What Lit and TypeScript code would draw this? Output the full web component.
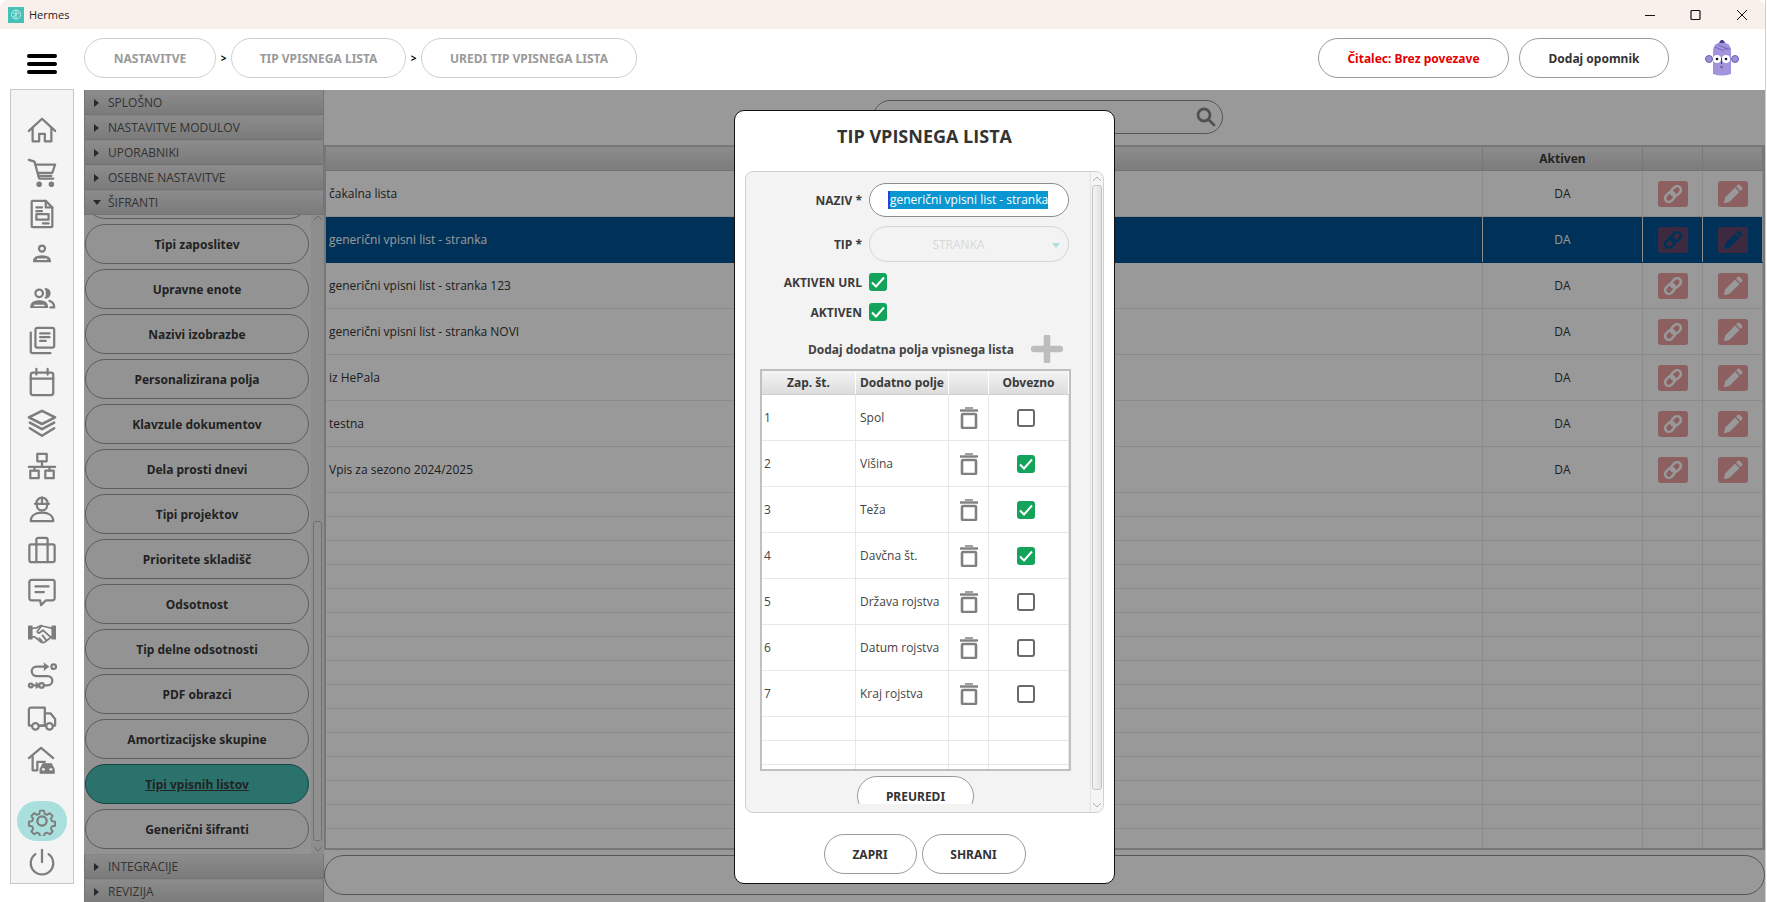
import { LitElement, html, css, svg } from "lit";
import { customElement } from "lit/decorators.js";

const FS = (inner: unknown, vb = "0 0 32 32") => html`<svg class="ic" viewBox=${vb} fill="none" stroke="currentColor" stroke-width="2.400" stroke-linecap="round" stroke-linejoin="round">${inner}</svg>`;

const NAV = [
  svg`<path d="M2 17 16 4l14 13"/><path d="M6 14v14h7v-8h6v8h7V14"/>`,
  svg`<path d="M2 3l6 2 5 18h15"/><path d="M9 8h21l-3 9H11.500"/><path d="M12 20h14"/><circle cx="13" cy="29" r="1.800" fill="currentColor"/><circle cx="26" cy="29" r="1.800" fill="currentColor"/>`,
  svg`<path d="M6 2h14l7 7v20a1 1 0 0 1-1 1H6a1 1 0 0 1-1-1V3a1 1 0 0 1 1-1z"/><path d="M20 2v7h7"/><path d="M10 9h6M10 13h6"/><rect x="10" y="16" width="13" height="6"/><path d="M17 26h6"/>`,
  svg`<circle cx="16" cy="8" r="3.200"/><path d="M7 22c0-4 4-6 9-6s9 2 9 6z" fill="currentColor" stroke-width="1.400"/><path d="M11 19.500h10" stroke="#f4f4f4" stroke-width="1.600"/>`,
  svg`<circle cx="13" cy="11" r="4"/><path d="M20 6.500c3 .5 4 2.500 4 4.500s-1 4-4 4.500" fill="currentColor"/><path d="M4 26c0-5 4-7 9-7s9 2 9 7z" fill="currentColor" stroke-width="1.400"/><path d="M8 24h10" stroke="#f4f4f4" stroke-width="1.500"/><path d="M24 19c3 1 5 3 5 7h-4"/>`,
  svg`<rect x="9" y="3" width="20" height="21" rx="2"/><path d="M14 9h10M14 13h10M14 17h6"/><path d="M4 8v20a2 2 0 0 0 2 2h19"/>`,
  svg`<rect x="4" y="6" width="24" height="24" rx="2.500"/><path d="M4 12.500h24"/><path d="M10 2v6M22 2v6"/>`,
  svg`<g stroke-width="2.700"><path d="M16 2 30 9 16 16 2 9z"/><path d="M3 14.500l13 7 13-7"/><path d="M3 20.500l13 8 13-8"/></g>`,
  svg`<rect x="11" y="3" width="10" height="8"/><path d="M16 11v6M2 17h28M8 17v4M24 17v4"/><rect x="3.500" y="21" width="9" height="8"/><rect x="19.500" y="21" width="9" height="8"/>`,
  svg`<path d="M10 11a6 6 0 0 1 12 0"/><path d="M8.500 11.500h15M16 5v5"/><path d="M10.500 13a5.500 5.500 0 0 0 11 0"/><path d="M4 30c0-6 5-9 12-9s12 3 12 9z"/>`,
  svg`<rect x="2.500" y="10" width="27" height="19" rx="2"/><path d="M10 10V5a2 2 0 0 1 2-2h8a2 2 0 0 1 2 2v5"/><path d="M10 10v19M22 10v19"/>`,
  svg`<path d="M5 3h22a2.500 2.500 0 0 1 2.500 2.500v17A2.500 2.500 0 0 1 27 25H20l-5 5-1-5H5a2.500 2.500 0 0 1-2.500-2.500v-17A2.500 2.500 0 0 1 5 3z"/><path d="M9 10h14M9 16h9"/>`,
  svg`<g stroke-width="1.900"><path d="M2 8h3v13H2z" fill="currentColor"/><path d="M30 8h-3v13h3z" fill="currentColor"/><path d="M5 10l5-.5 5-2.500 3.500 1L27 10"/><path d="M5 19h3l7 5.500c1 1 3 1 4 0l8-6"/><path d="M15 8l-4 5c-.5 1 1 2 2 2l4-3 8 7"/><path d="M13 20.500l3 3M16.500 17.500l4 5"/></g>`,
  svg`<path d="M22 6H10a5 5 0 0 0 0 10h12a5 5 0 0 1 0 10h-4"/><path d="M18 2l5 4-5 4" fill="currentColor" stroke-width="1"/><circle cx="28.500" cy="6" r="2.500"/><circle cx="4" cy="26" r="2"/><path d="M7 26h3" /><path d="M10 23l4 3-4 3z" fill="currentColor" stroke-width="1"/><circle cx="15.500" cy="26" r="2.500"/>`,
  svg`<path d="M2 24V7a2 2 0 0 1 2-2h15v19h-6"/><path d="M19 11h6l5 6v7h-2"/><circle cx="9" cy="25" r="3.500"/><circle cx="24" cy="25" r="3.500"/><path d="M3 24h2M14 24h6"/>`,
  svg`<path d="M2 14 15 3l13 11"/><path d="M6 12v15h5V18h8"/><path d="M14 30v-4l3-6h9l3 6v4z" fill="currentColor" stroke-width="1.200"/><path d="M17 26h1M25 26h1" stroke="#f4f4f4"/>`,
];
const GEAR = svg`<circle cx="16" cy="16" r="5"/><path d="M13.500 3h5l.8 4 3 1.300 3.500-2.200 3.500 3.500-2.200 3.500 1.300 3 4 .8v5l-4 .8-1.300 3 2.200 3.500-3.500 3.500-3.500-2.200-3 1.300-.8 4h-5l-.8-4-3-1.300-3.500 2.200-3.500-3.500 2.200-3.500-1.300-3-4-.8v-5l4-.8 1.300-3-2.200-3.500 3.500-3.500 3.500 2.200 3-1.300z" transform="translate(2.400 2.400) scale(.85)"/>`;
const POWER = svg`<path d="M16 2v13"/><path d="M9 6.500a12 12 0 1 0 14 0"/>`;

const MENU_TOP = ["SPLOŠNO", "NASTAVITVE MODULOV", "UPORABNIKI", "OSEBNE NASTAVITVE"];
const MENU_BOTTOM = ["INTEGRACIJE", "REVIZIJA"];
const ITEMS = ["Tipi zaposlitev", "Upravne enote", "Nazivi izobrazbe", "Personalizirana polja", "Klavzule dokumentov", "Dela prosti dnevi", "Tipi projektov", "Prioritete skladišč", "Odsotnost", "Tip delne odsotnosti", "PDF obrazci", "Amortizacijske skupine", "Tipi vpisnih listov", "Generični šifranti"];
const ROWS = ["čakalna lista", "generični vpisni list - stranka", "generični vpisni list - stranka 123", "generični vpisni list - stranka NOVI", "iz HePala", "testna", "Vpis za sezono 2024/2025"];
const FIELDS: [string, boolean][] = [["Spol", false], ["Višina", true], ["Teža", true], ["Davčna št.", true], ["Država rojstva", false], ["Datum rojstva", false], ["Kraj rojstva", false]];

const LINK = html`<svg viewBox="0 0 24 24" fill="none" stroke="currentColor" stroke-width="3"><g transform="rotate(-45 12 12)"><rect x="0.500" y="7.500" width="13" height="9" rx="4.500"/><rect x="10.500" y="7.500" width="13" height="9" rx="4.500"/></g></svg>`;
const PENCIL = html`<svg viewBox="0 0 24 24" fill="currentColor"><path d="M1 23l1.800-7L14.500 4.300l5.200 5.200L8 21.200z"/><path d="M15.700 3.100 17.800 1a1.500 1.500 0 0 1 2 0l3.200 3.200a1.500 1.500 0 0 1 0 2l-2.100 2.100z"/></svg>`;
const TRASH = html`<svg class="trash" viewBox="0 0 18 22" fill="none" stroke="#808080"><path d="M0 3.500h18" stroke-width="2.400"/><path d="M5 1h8" stroke-width="1.500"/><rect x="2" y="7" width="14" height="14" rx="1" stroke-width="2.600"/></svg>`;

const check = (on: boolean) => on
  ? html`<span class="cb on"><svg viewBox="0 0 18 18" fill="none" stroke="#fff" stroke-width="2"><path d="M3 9.500l4 4L15 4.500"/></svg></span>`
  : html`<span class="cb"></span>`;

@customElement("app-root")
export class AppRoot extends LitElement {
  static styles = css`
    :host { display: block; width: 1767px; height: 902px; overflow: hidden; background: #fff; font-family: "Open Sans", "Noto Sans", sans-serif; }
    .app { width: 1765px; height: 902px; display: flex; flex-direction: column; border-right: 1px solid #cfcfcf; background: #fff; overflow: hidden; }
    .titlebar { height: 29px; flex: none; background: #f9f0ec; display: flex; align-items: center; padding-left: 8px; border-radius: 8px 8px 0 0; font-size: 11px; color: #222; }
    .logo { width: 16px; height: 16px; background: #45c1b8; margin-right: 5px; display: block; }
    .winctl { margin-left: auto; display: flex; width: 138px; }
    .winctl svg { width: 46px; height: 12px; display: block; }
    .header { height: 61px; flex: none; display: flex; align-items: flex-start; padding-top: 9px; box-sizing: border-box; }
    .burger { width: 84px; flex: none; display: flex; flex-direction: column; gap: 4px; padding: 16px 0 0 27px; box-sizing: border-box; }
    .burger i { display: block; width: 30px; height: 4px; border-radius: 2px; background: #000; }
    .crumbs { display: flex; align-items: center; font-weight: 700; font-size: 12px; color: #000; }
    .pill { height: 40px; box-sizing: border-box; border: 1px solid #cfcfcf; border-radius: 20px; display: flex; align-items: center; justify-content: center; background: #fff; }
    .crumb { color: #9a9a9a; font-family: "Noto Sans", sans-serif; font-weight: 700; font-size: 12px; }
    .sep { width: 15px; text-align: center; font-size: 10px; }
    .actions { margin-left: auto; display: flex; align-items: flex-start; gap: 10px; }
    .act { border-color: #9a9a9a; font-family: "Noto Sans", sans-serif; font-weight: 700; font-size: 12px; color: #333; }
    .act.red { color: #e60000; width: 191px; }
    .act.dark { width: 150px; }
    .mascot { width: 40px; height: 44px; margin: 0 23px 0 23px; display: block; }
    .body { flex: 1; display: flex; min-height: 0; }
    .rail { width: 84px; flex: none; padding-left: 10px; box-sizing: border-box; }
    .nav { width: 64px; height: 795px; margin-top: -1px; box-sizing: border-box; background: #f4f4f4; border: 1px solid #c8c8c8; padding-top: 19px; display: flex; flex-direction: column; align-items: center; color: #7d7d7d; }
    .nv { height: 42px; width: 50px; display: flex; align-items: center; justify-content: center; flex: none; }
    .nv.gear { height: 40px; margin-top: 20px; background: #a9dfdc; border-radius: 20px; }
    .nv.power { height: 43px; }
    .ic { width: 30px; height: 30px; display: block; }
    .content { flex: 1; position: relative; display: flex; min-width: 0; }
    .overlay { position: absolute; inset: 0; background: rgba(0, 0, 0, .4); }
    .acc { width: 240px; flex: none; display: flex; flex-direction: column; }
    .ah { height: 25px; flex: none; box-sizing: border-box; border: 1px solid #c2c2c2; border-top-color: #e0e0e0; background: linear-gradient(#e9e9e9, #cdcdcd); display: flex; align-items: center; padding-left: 9px; font-size: 12px; color: #555; }
    .tri { flex: none; width: 0; height: 0; border-left: 5px solid #444; border-top: 4px solid transparent; border-bottom: 4px solid transparent; margin-right: 9px; }
    .tri.open { border-top: 5px solid #444; border-left: 4px solid transparent; border-right: 4px solid transparent; border-bottom: 0; margin-right: 7px; margin-left: -1px; }
    .list { height: 639px; flex: none; overflow: hidden; display: flex; background: #f6f6f6; }
    .items { width: 226px; flex: none; padding-left: 1px; display: flex; flex-direction: column; gap: 5px; }
    .btn { height: 40px; flex: none; width: 224px; box-sizing: border-box; border: 1px solid #9a9a9a; border-radius: 20px; display: flex; align-items: center; justify-content: center; background: #f6f6f6; font-family: "Noto Sans", sans-serif; font-weight: 700; font-size: 12px; color: #3a3a3a; }
    .btn.peek { margin-top: -36px; }
    .btn.sel { background: #48beb6; border-color: #24736d; text-decoration: underline; }
    .vbar { width: 13px; background: #ececec; display: flex; flex-direction: column; align-items: center; position: relative; }
    .vbar .chev { width: 8px; height: 4px; display: block; flex: none; color: #b0b0b0; }
    .vbar .up { margin-top: 1px; }
    .vbar .thumb { position: absolute; left: 2px; right: 2px; top: 306px; bottom: 13px; border: 1px solid #bdbdbd; border-radius: 3px; background: #f0f0f0; }
    .vbar .dn { position: absolute; bottom: 3px; }
    .main { flex: 1; min-width: 0; display: flex; flex-direction: column; }
    .search { margin: 10px 0 11px 549px; width: 350px; height: 34px; border-color: #8f8f8f; justify-content: flex-end; padding-right: 6px; color: #888; }
    .search svg { width: 20px; height: 20px; display: block; }
    .table { height: 705px; box-sizing: border-box; border: 2px solid #c6c6c6; overflow: hidden; background: #fff; font-size: 12px; color: #333; }
    .tr { display: grid; grid-template-columns: 1157px 160px 60px 60px; }
    .thead { height: 23px; background: linear-gradient(#e9e9e9, #cfcfcf); border-bottom: 1px solid #c2c2c2; box-sizing: content-box; }
    .thead > div { border-right: 1px solid #c8c8c8; display: flex; align-items: center; justify-content: center; font-weight: 700; font-family: "Noto Sans", sans-serif; color: #3d3d3d; }
    .row { height: 46px; box-sizing: border-box; border-bottom: 1px solid #e8e8e8; }
    .row.blank { height: 24px; }
    .row > div { border-right: 1px solid #e8e8e8; display: flex; align-items: center; }
    .row .name { padding-left: 3px; }
    .row .c { justify-content: center; }
    .row.sel { background: #005393; color: #fff; border-bottom-color: #005393; }
    .rbtn { width: 30px; height: 26px; border-radius: 3px; background: rgba(210, 60, 65, .49); color: #fff; display: flex; align-items: center; justify-content: center; }
    .rbtn svg { width: 20px; height: 20px; display: block; }
    .row.sel .rbtn { color: #005393; }
    .bottom { margin-top: 5px; height: 40px; border-color: #8f8f8f; }
    .modal { position: absolute; left: 650px; top: 20px; width: 381px; height: 774px; box-sizing: border-box; background: #fff; border: 1px solid #111; border-radius: 10px; display: flex; flex-direction: column; align-items: center; }
    .modal h2 { margin: 0 0 10px; height: 50px; flex: none; display: flex; align-items: center; font-size: 18px; font-weight: 700; color: #333; }
    .panel { width: 359px; height: 642px; flex: none; box-sizing: border-box; border: 1px solid #d0d0d0; border-radius: 8px; background: #f3f3f3; display: flex; overflow: hidden; }
    .pc { flex: 1; min-width: 0; height: 632px; overflow: hidden; padding-top: 11px; box-sizing: border-box; }
    .fr { display: grid; grid-template-columns: 116px 1fr; column-gap: 7px; align-items: center; font-weight: 700; font-size: 12px; color: #3a3a3a; }
    .fr > label { text-align: right; }
    .inp { width: 200px; height: 34px; box-sizing: border-box; border: 1px solid #8c8c8c; border-radius: 17px; background: #fff; display: flex; align-items: center; padding-left: 18px; font-weight: 400; font-size: 12px; }
    .selt { background: #0a96d1; color: #fff; border-left: 2px solid #2a3fe0; height: 18px; line-height: 18px; white-space: nowrap; }
    .dis { width: 200px; height: 36px; box-sizing: border-box; border: 1px solid #d4d4d4; border-radius: 18px; display: flex; align-items: center; justify-content: center; padding-right: 21px; font-weight: 400; font-size: 12px; color: #d8d8d8; position: relative; }
    .dis i { position: absolute; right: 8px; top: 16px; width: 0; height: 0; border-top: 5px solid #a9dfdc; border-left: 4px solid transparent; border-right: 4px solid transparent; }
    .m9 { margin-top: 9px; }
    .m11 { margin-top: 11px; }
    .m12 { margin-top: 12px; }
    .cb { width: 18px; height: 18px; box-sizing: border-box; border-radius: 3px; display: block; flex: none; border: 2px solid #6a6a6a; background: #fff; }
    .cb.on { background: #14a35a; border: 0; }
    .cb svg { width: 18px; height: 18px; display: block; }
    .addr { margin-top: 15px; height: 26px; display: flex; align-items: center; padding-left: 62px; font-family: "Noto Sans", sans-serif; font-weight: 700; font-size: 12px; color: #444; }
    .addr svg { width: 32px; height: 28px; margin-left: 17px; display: block; }
    .it { margin: 7px 0 0 14px; width: 311px; height: 402px; box-sizing: border-box; border: 2px solid #c0c0c0; background: #fff; overflow: hidden; font-size: 12px; color: #444; }
    .itr { display: grid; grid-template-columns: 94px 93px 40px 80px; }
    .ith { height: 24px; box-sizing: border-box; border-bottom: 1px solid #d0d0d0; background: linear-gradient(#f4f4f4, #dcdcdc); }
    .ith > div { border-right: 1px solid #fff; display: flex; align-items: center; justify-content: center; font-family: "Noto Sans", sans-serif; font-weight: 700; font-size: 12px; color: #3a3a3a; }
    .itb { height: 46px; box-sizing: border-box; border-bottom: 1px solid #e8e8e8; }
    .itb.blank { height: 24px; }
    .itb > div { border-right: 1px solid #e8e8e8; display: flex; align-items: center; padding-left: 4px; }
    .itb > div:first-child { padding-left: 2px; }
    .itb > .c { padding-left: 0; justify-content: center; }
    .itb > .cc { padding-right: 5px; }
    .trash { width: 18px; height: 22px; display: block; }
    .pre { margin: 5px 0 0 111px; width: 117px; height: 40px; box-sizing: border-box; border: 1px solid #9a9a9a; border-radius: 20px; background: #fff; display: flex; align-items: center; justify-content: center; font-family: "Noto Sans", sans-serif; font-weight: 700; font-size: 12px; color: #333; }
    .pbar { width: 12px; flex: none; position: relative; border-left: 1px solid #e4e4e4; background: #f5f5f5; }
    .pbar svg { width: 8px; height: 4px; position: absolute; left: 2px; color: #b0b0b0; display: block; }
    .pbar .th { position: absolute; left: 1px; right: 1px; top: 13px; bottom: 22px; border: 1px solid #c4c4c4; border-radius: 3px; background: linear-gradient(90deg, #f4f4f4, #e2e2e2); }
    .foot { display: flex; gap: 5px; margin-top: 21px; }
    .fb { height: 40px; box-sizing: border-box; border: 1px solid #9a9a9a; border-radius: 20px; background: #fff; display: flex; align-items: center; justify-content: center; font-family: "Noto Sans", sans-serif; font-weight: 700; font-size: 12px; color: #333; }
  `;

  private chev(up: boolean, cls = "") {
    return html`<svg class="chev ${cls}" viewBox="0 0 8 4" fill="none" stroke="currentColor"><path d=${up ? "M0 4 4 0l4 4" : "M0 0l4 4 4-4"}/></svg>`;
  }

  render() {
    return html`<div class="app">
      <div class="titlebar">
        <svg class="logo" viewBox="0 0 16 16" fill="none" stroke="#bfeeea" stroke-width="1"><path d="M8 3a4.500 4.500 0 1 0 0 9 4.500 4.500 0 0 0 0-9zM8 3v9M5 5.500l3 2 3-2M5 10l3-2"/></svg>
        Hermes
        <div class="winctl">
          <svg viewBox="0 0 46 12" fill="none" stroke="#111"><path d="M18 6.500h10"/></svg>
          <svg viewBox="0 0 46 12" fill="none" stroke="#111" stroke-width="1.200"><rect x="18" y="1.500" width="9" height="9" rx="1"/></svg>
          <svg viewBox="0 0 46 12" fill="none" stroke="#111"><path d="M18 1l10 10M28 1 18 11"/></svg>
        </div>
      </div>
      <div class="header">
        <div class="burger"><i></i><i></i><i></i></div>
        <div class="crumbs">
          <div class="pill crumb" style="width:132px">NASTAVITVE</div><span class="sep">&gt;</span>
          <div class="pill crumb" style="width:175px">TIP VPISNEGA LISTA</div><span class="sep">&gt;</span>
          <div class="pill crumb" style="width:216px">UREDI TIP VPISNEGA LISTA</div>
        </div>
        <div class="actions">
          <div class="pill act red">Čitalec: Brez povezave</div>
          <div class="pill act dark">Dodaj opomnik</div>
          <svg class="mascot" viewBox="0 0 40 44">
            <circle cx="7" cy="21" r="3.500" fill="#9b8fd6" stroke="#6d60b0"/><circle cx="33" cy="21" r="3.500" fill="#9b8fd6" stroke="#6d60b0"/>
            <path d="M16 6l3-4h2l3 4z" fill="#4a3a8c"/>
            <path d="M11 13q0-6 5-8h8q5 2 5 8v23q-9 3-18 0z" fill="#a193dc"/>
            <path d="M13 9l9 4M16 7l10 4M22 11h7" stroke="#6d60b0" stroke-width=".8" fill="none"/>
            <circle cx="15" cy="21" r="4" fill="#fff"/><circle cx="24" cy="21" r="4" fill="#fff"/>
            <circle cx="15" cy="21" r="1.300" fill="#111"/><circle cx="24" cy="21" r="1.300" fill="#111"/>
            <path d="M19.500 20v6" stroke="#222" stroke-width=".8"/><path d="M18.500 29h2" stroke="#222"/>
          </svg>
        </div>
      </div>
      <div class="body">
        <div class="rail"><div class="nav">
          ${NAV.map((p) => html`<div class="nv">${FS(p)}</div>`)}
          <div class="nv gear">${FS(GEAR)}</div>
          <div class="nv power">${FS(POWER)}</div>
        </div></div>
        <div class="content">
          <div class="acc">
            ${MENU_TOP.map((t) => html`<div class="ah"><span class="tri"></span>${t}</div>`)}
            <div class="ah"><span class="tri open"></span>ŠIFRANTI</div>
            <div class="list">
              <div class="items">
                <div class="btn peek"></div>
                ${ITEMS.map((t) => html`<div class="btn ${t === "Tipi vpisnih listov" ? "sel" : ""}">${t}</div>`)}
              </div>
              <div class="vbar">${this.chev(true, "up")}<div class="thumb"></div>${this.chev(false, "dn")}</div>
            </div>
            ${MENU_BOTTOM.map((t) => html`<div class="ah"><span class="tri"></span>${t}</div>`)}
          </div>
          <div class="main">
            <div class="pill search"><svg viewBox="0 0 20 20" fill="none" stroke="currentColor" stroke-width="2.800" stroke-linecap="round"><circle cx="8" cy="8" r="6"/><path d="M13 13l5 5"/></svg></div>
            <div class="table">
              <div class="tr thead"><div></div><div>Aktiven</div><div></div><div></div></div>
              ${ROWS.map((r, i) => html`<div class="tr row ${i === 1 ? "sel" : ""}">
                <div class="name">${r}</div><div class="c">DA</div>
                <div class="c"><span class="rbtn">${LINK}</span></div>
                <div class="c"><span class="rbtn">${PENCIL}</span></div>
              </div>`)}
              ${Array.from({ length: 15 }).map(() => html`<div class="tr row blank"><div></div><div></div><div></div><div></div></div>`)}
            </div>
            <div class="pill bottom"></div>
          </div>
          <div class="overlay"></div>
          <div class="modal">
            <h2>TIP VPISNEGA LISTA</h2>
            <div class="panel">
              <div class="pc">
                <div class="fr"><label>NAZIV *</label><div class="inp"><span class="selt">generični vpisni list - stranka</span></div></div>
                <div class="fr m9"><label>TIP *</label><div class="dis">STRANKA<i></i></div></div>
                <div class="fr m11"><label>AKTIVEN URL</label>${check(true)}</div>
                <div class="fr m12"><label>AKTIVEN</label>${check(true)}</div>
                <div class="addr">Dodaj dodatna polja vpisnega lista
                  <svg viewBox="0 0 32 28" fill="none" stroke="#bdbdbd" stroke-width="6.500" stroke-linecap="round"><path d="M3 14h26M16 2v24"/></svg>
                </div>
                <div class="it">
                  <div class="itr ith"><div>Zap. št.</div><div>Dodatno polje</div><div></div><div>Obvezno</div></div>
                  ${FIELDS.map(([f, on], i) => html`<div class="itr itb"><div>${i + 1}</div><div>${f}</div><div class="c">${TRASH}</div><div class="c cc">${check(on)}</div></div>`)}
                  ${[0, 1, 2].map(() => html`<div class="itr itb blank"><div></div><div></div><div></div><div></div></div>`)}
                </div>
                <div class="pre">PREUREDI</div>
              </div>
              <div class="pbar">
                <svg style="top:5px" viewBox="0 0 8 4" fill="none" stroke="currentColor"><path d="M0 4 4 0l4 4"/></svg>
                <div class="th"></div>
                <svg style="bottom:5px" viewBox="0 0 8 4" fill="none" stroke="currentColor"><path d="M0 0l4 4 4-4"/></svg>
              </div>
            </div>
            <div class="foot">
              <div class="fb" style="width:93px">ZAPRI</div>
              <div class="fb" style="width:104px">SHRANI</div>
            </div>
          </div>
        </div>
      </div>
    </div>`;
  }
}
